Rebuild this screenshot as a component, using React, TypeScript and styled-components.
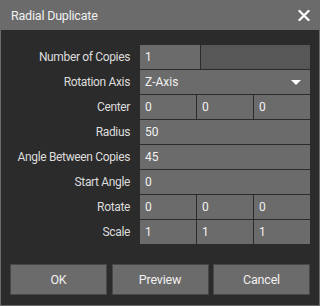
import React from 'react';
import styled, { createGlobalStyle } from 'styled-components';

const GlobalStyle = createGlobalStyle`
  html, body {
    margin: 0;
    padding: 0;
    background: #2b2b2b;
  }
  * {
    box-sizing: border-box;
  }
`;

const Window = styled.div`
  width: 320px;
  height: 306px;
  display: flex;
  flex-direction: column;
  background: #2b2b2b;
  border: 1px solid #6b6b6b;
  border-top: none;
  font-family: Roboto, "Liberation Sans", sans-serif;
  font-size: 12px;
  color: #e6e6e6;
`;

const TitleBar = styled.div`
  height: 30px;
  margin: 0 -1px;
  padding: 0 10px 0 11px;
  display: flex;
  align-items: center;
  justify-content: space-between;
  background: #6b6b6b;
  color: #f0f0f0;
  font-size: 12.5px;
  letter-spacing: -0.2px;
`;

const CloseButton = styled.button`
  width: 12px;
  height: 12px;
  padding: 0;
  border: none;
  background: none;
  display: flex;
  align-items: center;
  justify-content: center;
  cursor: pointer;
`;

const Form = styled.div`
  display: grid;
  grid-template-columns: 129px 170px;
  column-gap: 10px;
  row-gap: 1px;
  padding: 15px 0 0 0;
`;

const Label = styled.div`
  height: 24px;
  display: flex;
  align-items: center;
  justify-content: flex-end;
  color: #dcdcdc;
  letter-spacing: -0.35px;
`;

const Field = styled.div<{ $cols?: number }>`
  height: 24px;
  display: grid;
  grid-template-columns: repeat(${p => p.$cols ?? 1}, 1fr);
  column-gap: 1px;
`;

const Cell = styled.div<{ $dark?: boolean }>`
  background: ${p => (p.$dark ? '#575757' : '#6b6b6b')};
  display: flex;
  align-items: center;
  padding-left: 5px;
  color: #f2f2f2;
`;

const SliderField = styled.div`
  height: 24px;
  display: grid;
  grid-template-columns: 60px 1fr;
  column-gap: 1px;
`;

const SelectCell = styled(Cell)`
  justify-content: space-between;
  padding-right: 9px;
`;

const Buttons = styled.div`
  margin-top: 20px;
  padding: 0 9px 0 9px;
  display: grid;
  grid-template-columns: 97px 97px 97px;
  justify-content: space-between;
`;

const Button = styled.button`
  height: 31px;
  background: #6b6b6b;
  border: 1px solid #474747;
  color: #f0f0f0;
  font-family: Roboto, "Liberation Sans", sans-serif;
  font-size: 12.5px;
  letter-spacing: -0.2px;
  padding: 0;
  cursor: pointer;
`;

const rows: { label: string; values: string[] }[] = [
  { label: 'Center', values: ['0', '0', '0'] },
  { label: 'Radius', values: ['50'] },
  { label: 'Angle Between Copies', values: ['45'] },
  { label: 'Start Angle', values: ['0'] },
  { label: 'Rotate', values: ['0', '0', '0'] },
  { label: 'Scale', values: ['1', '1', '1'] },
];

export default function App() {
  return (
    <>
      <GlobalStyle />
      <Window>
        <TitleBar>
          <span>Radial Duplicate</span>
          <CloseButton aria-label="Close">
            <svg width="12" height="11" viewBox="0 0 12 11">
              <path d="M1.5 1 L10.5 10 M10.5 1 L1.5 10" stroke="#fff" strokeWidth="2.2" strokeLinecap="square" />
            </svg>
          </CloseButton>
        </TitleBar>
        <Form>
          <Label>Number of Copies</Label>
          <SliderField>
            <Cell>1</Cell>
            <Cell $dark />
          </SliderField>
          <Label>Rotation Axis</Label>
          <Field>
            <SelectCell>
              <span>Z-Axis</span>
              <svg width="10" height="5" viewBox="0 0 10 5">
                <path d="M0 0 L10 0 L5 5 Z" fill="#fff" />
              </svg>
            </SelectCell>
          </Field>
          {rows.map(r => (
            <React.Fragment key={r.label}>
              <Label>{r.label}</Label>
              <Field $cols={r.values.length}>
                {r.values.map((v, i) => (
                  <Cell key={i}>{v}</Cell>
                ))}
              </Field>
            </React.Fragment>
          ))}
        </Form>
        <Buttons>
          <Button>OK</Button>
          <Button>Preview</Button>
          <Button>Cancel</Button>
        </Buttons>
      </Window>
    </>
  );
}
